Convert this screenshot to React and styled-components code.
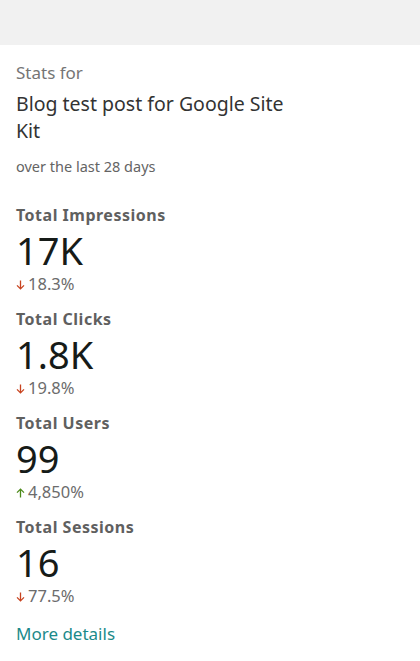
import styled, { createGlobalStyle } from "styled-components";

const GlobalStyle = createGlobalStyle`
  body {
    margin: 0;
    background: #fff;
    font-family: "Noto Sans", "Open Sans", sans-serif;
  }
`;

const stats = [
    { label: "Total Impressions", value: "17K", change: "18.3%", up: false },
    { label: "Total Clicks", value: "1.8K", change: "19.8%", up: false },
    { label: "Total Users", value: "99", change: "4,850%", up: true },
    { label: "Total Sessions", value: "16", change: "77.5%", up: false },
];

const Arrow = ({ up }) => (
    <svg width="9" height="10" viewBox="0 0 9 10" fill="none">
        {up ? (
            <path d="M4.5 9.5V1.2M1 4.6L4.5 1.1L8 4.6" stroke="currentColor" strokeWidth="1.3" />
        ) : (
            <path d="M4.5 0.5V8.8M1 5.4L4.5 8.9L8 5.4" stroke="currentColor" strokeWidth="1.3" />
        )}
    </svg>
);

const App = () => {
    return (
        <>
            <GlobalStyle />
            <TopBar />
            <Panel>
                <StatsFor>Stats for</StatsFor>
                <Title>Blog test post for Google Site Kit</Title>
                <Period>over the last 28 days</Period>
                <StatList>
                    {stats.map((s) => (
                        <Stat key={s.label}>
                            <Label>{s.label}</Label>
                            <Value>{s.value}</Value>
                            <Change $up={s.up}>
                                <Arrow up={s.up} />
                                <span>{s.change}</span>
                            </Change>
                        </Stat>
                    ))}
                </StatList>
                <MoreLink href="#">More details</MoreLink>
            </Panel>
        </>
    );
};

const TopBar = styled.div`
    height: 45px;
    background: #f1f1f1;
`;

const Panel = styled.div`
    padding: 18px 16px 16px;
    display: flex;
    flex-direction: column;
    align-items: flex-start;
`;

const StatsFor = styled.div`
    font-size: 17px;
    line-height: 20px;
    color: #757575;
`;

const Title = styled.h1`
    margin: 7px 0 0;
    max-width: 290px;
    font-size: 19.5px;
    font-weight: 400;
    line-height: 27px;
    color: #333;
`;

const Period = styled.div`
    margin-top: 12px;
    font-size: 14.5px;
    line-height: 20px;
    color: #646464;
`;

const StatList = styled.div`
    margin-top: 29px;
    display: flex;
    flex-direction: column;
    gap: 16px;
`;

const Stat = styled.div`
    display: flex;
    flex-direction: column;
`;

const Label = styled.div`
    font-size: 16px;
    font-weight: 700;
    line-height: 20px;
    letter-spacing: 0.5px;
    color: #5f605f;
`;

const Value = styled.div`
    font-size: 38px;
    line-height: 50px;
    color: #161b18;
`;

const Change = styled.div`
    display: flex;
    align-items: center;
    gap: 3px;
    font-size: 16.5px;
    line-height: 18px;
    color: #6c6c6c;
    svg {
        color: ${(p) => (p.$up ? "#4d8a1a" : "#c8431f")};
        margin-top: 2px;
    }
`;

const MoreLink = styled.a`
    margin-top: 18px;
    font-size: 17px;
    line-height: 22px;
    color: #1b8a8a;
    text-decoration: none;
`;

export default App;
